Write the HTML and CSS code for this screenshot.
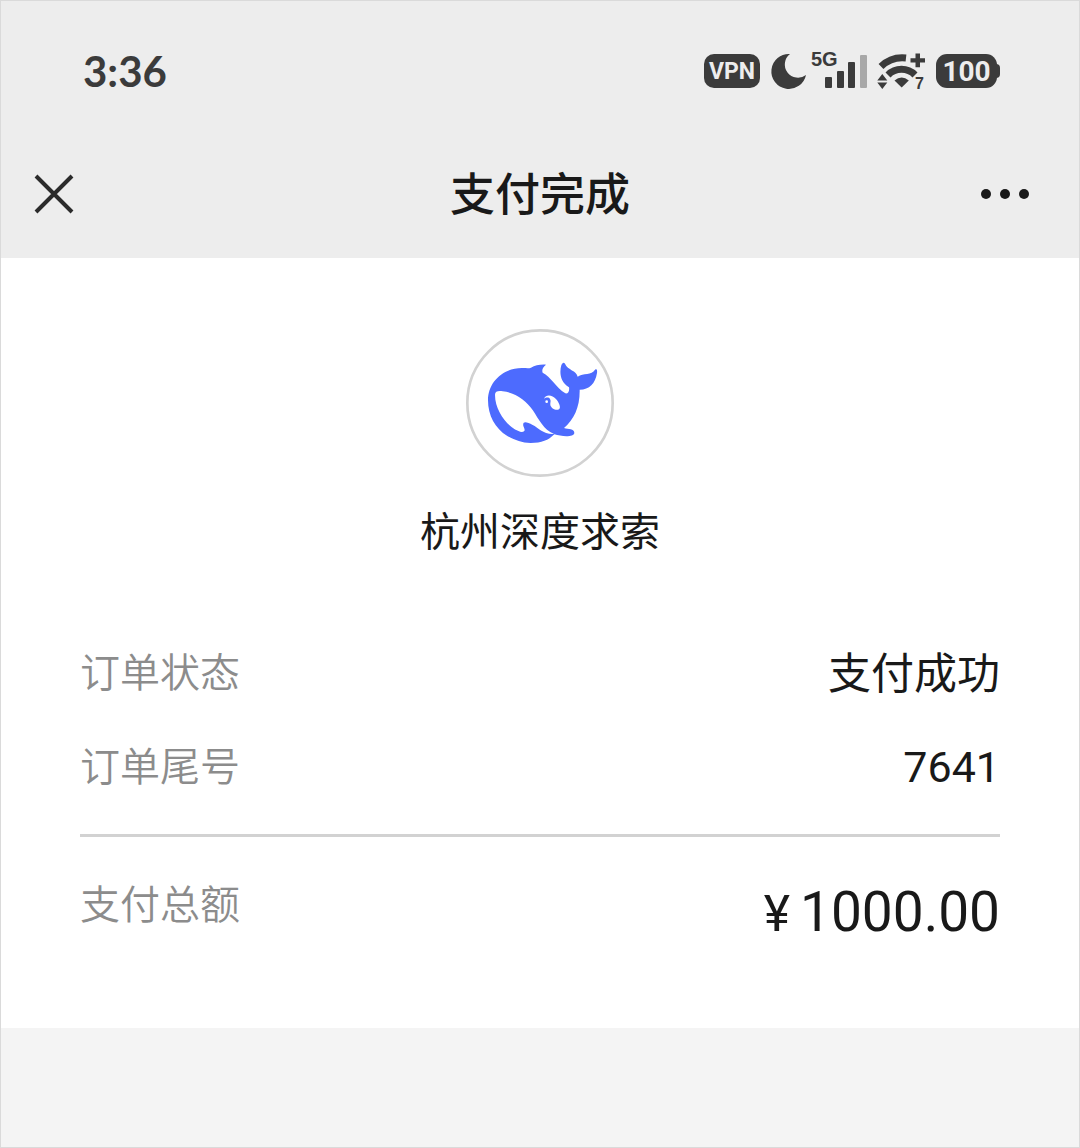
FILE: index.html
```html
<!DOCTYPE html>
<html lang="zh-CN">
<head>
    <meta charset="UTF-8">
    <meta name="viewport" content="width=device-width, initial-scale=1.0">
    <title>支付完成</title>
    <link rel="stylesheet" href="styles.css">
</head>
<body>
    <header class="header">
        <div class="status-bar">
            <span class="time">3:36</span>
            <div class="status-icons">
                <span class="vpn">VPN</span>
                <svg class="moon" width="36" height="36" viewBox="0 0 36 36">
                    <path d="M19 1A17.5 17.5 0 1 0 35 22A12.6 12.6 0 0 1 19 1Z"/>
                </svg>
                <svg class="signal" width="57" height="40" viewBox="0 0 57 40">
                    <text x="0" y="15" class="signal-text">5G</text>
                    <rect x="14" y="26" width="7" height="11" rx="1"/>
                    <rect x="26" y="20" width="7" height="17" rx="1"/>
                    <rect x="37" y="11" width="7" height="26" rx="1"/>
                    <rect x="49" y="4" width="7" height="33" rx="1" class="bar-off"/>
                </svg>
                <svg class="wifi" width="48" height="38" viewBox="0 0 48 38">
                    <path class="wave" d="M3 14.5A31 31 0 0 1 28 6"/>
                    <path class="wave" d="M10 23A19 19 0 0 1 37 23"/>
                    <path d="M16.500 28.500Q23.700 22.500 30.800 28.500L23.700 35.500Z"/>
                    <path d="M4.3 22L9.3 28.5H-.7ZM-.7 30.5H9.3L4.3 37Z"/>
                    <path d="M37.5 1.5h4.5v4.7h5v4.3h-5v4.700h-4.500v-4.700h-5v-4.300h5z"/>
                    <text x="37" y="37" class="wifi-text">7</text>
                </svg>
                <span class="battery">100</span>
            </div>
        </div>
        <nav class="nav-bar">
            <button class="nav-btn" type="button" aria-label="关闭">
                <svg width="38" height="38" viewBox="0 0 38 38">
                    <path class="close" d="M1 1L37 37M37 1L1 37"/>
                </svg>
            </button>
            <h1>支付完成</h1>
            <button class="nav-btn more" type="button" aria-label="更多">
                <svg width="50" height="12" viewBox="0 0 50 12">
                    <circle cx="6" cy="6" r="5"/>
                    <circle cx="25" cy="6" r="5"/>
                    <circle cx="44" cy="6" r="5"/>
                </svg>
            </button>
        </nav>
    </header>

    <main class="content">
        <div class="merchant">
            <svg width="148" height="148" viewBox="18 21 444 444">
                <circle class="ring" cx="240" cy="243" r="218"/>
                <path class="whale" d="M84 235C84 180 130 137 188 138C198 138 206 140 213 137C225 130 240 127 258 128C248 135 245 145 248 152C272 163 288 197 316 214C325 216 329 205 327 196C300 180 298 150 304 130C307 121 312 120 315 125C323 145 350 145 353 164C370 152 395 160 405 143C411 139 412 145 411 153C406 185 388 203 359 203C360 255 342 293 312 318C325 322 343 320 343 333C342 346 305 344 283 337C265 355 245 363 212 363C185 363 165 354 142 342C105 320 84 280 84 235Z"/>
                <path class="hole" d="M105 218C105 208 115 206 128 208C165 211 200 238 218 264C237 293 250 322 282 336C250 338 235 317 218 309C200 299 187 296 190 312C193 320 199 329 185 330C155 326 105 275 105 218Z"/>
                <path class="hole" d="M252 230C258 215 278 219 287 230C297 240 304 257 297 262C288 267 273 259 271 249C270 242 274 237 270 231C266 224 257 227 252 230Z"/>
                <circle class="hole" cx="260" cy="239" r="4"/>
            </svg>
            <h2>杭州深度求索</h2>
        </div>

        <dl class="order">
            <div class="row">
                <dt>订单状态</dt>
                <dd>支付成功</dd>
            </div>
            <div class="row">
                <dt>订单尾号</dt>
                <dd class="number">7641</dd>
            </div>
            <div class="row total">
                <dt>支付总额</dt>
                <dd class="amount"><span class="yen">¥</span>1000.00</dd>
            </div>
        </dl>
    </main>
</body>
</html>
```

FILE: styles.css
```css
* {
    box-sizing: border-box;
    margin: 0;
    padding: 0;
}
body {
    min-height: 100vh;
    background: #f4f4f4;
    border: 1px solid #dadada;
    color: #191919;
    font-family: "Noto Sans CJK SC", sans-serif;
}
svg {
    display: block;
    overflow: visible;
}

/* 状态栏 */
.header {
    background: #ededed;
}
.status-bar {
    display: flex;
    justify-content: space-between;
    align-items: center;
    height: 140px;
    padding: 0 80px 0 82px;
    color: #3b3b3b;
    fill: #3b3b3b;
    font-family: Lato, sans-serif;
    font-weight: bold;
}
.time {
    font-size: 42px;
}
.status-icons {
    display: flex;
    align-items: center;
}
.vpn {
    width: 56px;
    margin-right: 11px;
    padding-top: 2px;
    border-radius: 10px;
    background: #3b3b3b;
    color: #ededed;
    font: bold 23px/32px Roboto, sans-serif;
    text-align: center;
}
.moon {
    margin-right: 4px;
}
.signal {
    margin-right: 10px;
}
.signal-text {
    font: bold 20px "Liberation Sans", sans-serif;
}
.bar-off {
    fill: #a8a8a8;
}
.wifi {
    margin-right: 10px;
}
.wave {
    fill: none;
    stroke: #3b3b3b;
    stroke-width: 7px;
}
.wifi-text {
    font: bold 16px "Liberation Sans", sans-serif;
}
.battery {
    position: relative;
    width: 61px;
    margin-right: 2px;
    padding-top: 2px;
    border-radius: 11px;
    background: #3b3b3b;
    color: #ededed;
    font: bold 28px/32px Roboto, sans-serif;
    text-align: center;
}
.battery::after {
    content: "";
    position: absolute;
    top: 10px;
    right: -3px;
    width: 4px;
    height: 14px;
    border-radius: 0 4px 4px 0;
    background: #3b3b3b;
}

/* 导航栏 */
.nav-bar {
    display: grid;
    grid-template-columns: 1fr auto 1fr;
    align-items: center;
    height: 117px;
    padding: 0 49px 12px 34px;
}
.nav-bar h1 {
    padding: 0 0 4px 15px;
    font-size: 45px;
    font-weight: 500;
    line-height: 64px;
}
.nav-btn {
    display: flex;
    align-items: center;
    width: 50px;
    height: 50px;
    border: none;
    background: none;
    fill: #191919;
    cursor: pointer;
}
.more {
    justify-self: end;
}
.close {
    stroke: #2b2b2b;
    stroke-width: 4px;
}

/* 订单内容 */
.content {
    padding: 71px 79px 74px;
    background: #fff;
}
.merchant {
    display: flex;
    flex-direction: column;
    align-items: center;
    gap: 22px;
}
.merchant h2 {
    font-size: 40px;
    font-weight: 400;
    line-height: 60px;
}
.ring {
    fill: #fff;
    stroke: #d2d2d2;
    stroke-width: 8px;
}
.whale {
    fill: #4d6bfe;
}
.hole {
    fill: #fff;
}
.order {
    margin-top: 64px;
}
.row {
    display: flex;
    justify-content: space-between;
    align-items: center;
    height: 94px;
    font-size: 43px;
}
.row dt {
    color: #8c8c8c;
    font-size: 40px;
    font-weight: 350;
    line-height: 60px;
}
.row .number {
    padding-top: 6px;
    font-family: Roboto, sans-serif;
}
.total {
    align-items: flex-start;
    height: auto;
    margin-top: 23px;
    padding-top: 35px;
    border-top: 3px solid #d2d2d2;
}
.row .amount {
    font-family: Roboto, sans-serif;
    font-size: 55px;
    line-height: 80px;
}
.yen {
    margin-right: 10px;
    font-size: 50px;
}
```
